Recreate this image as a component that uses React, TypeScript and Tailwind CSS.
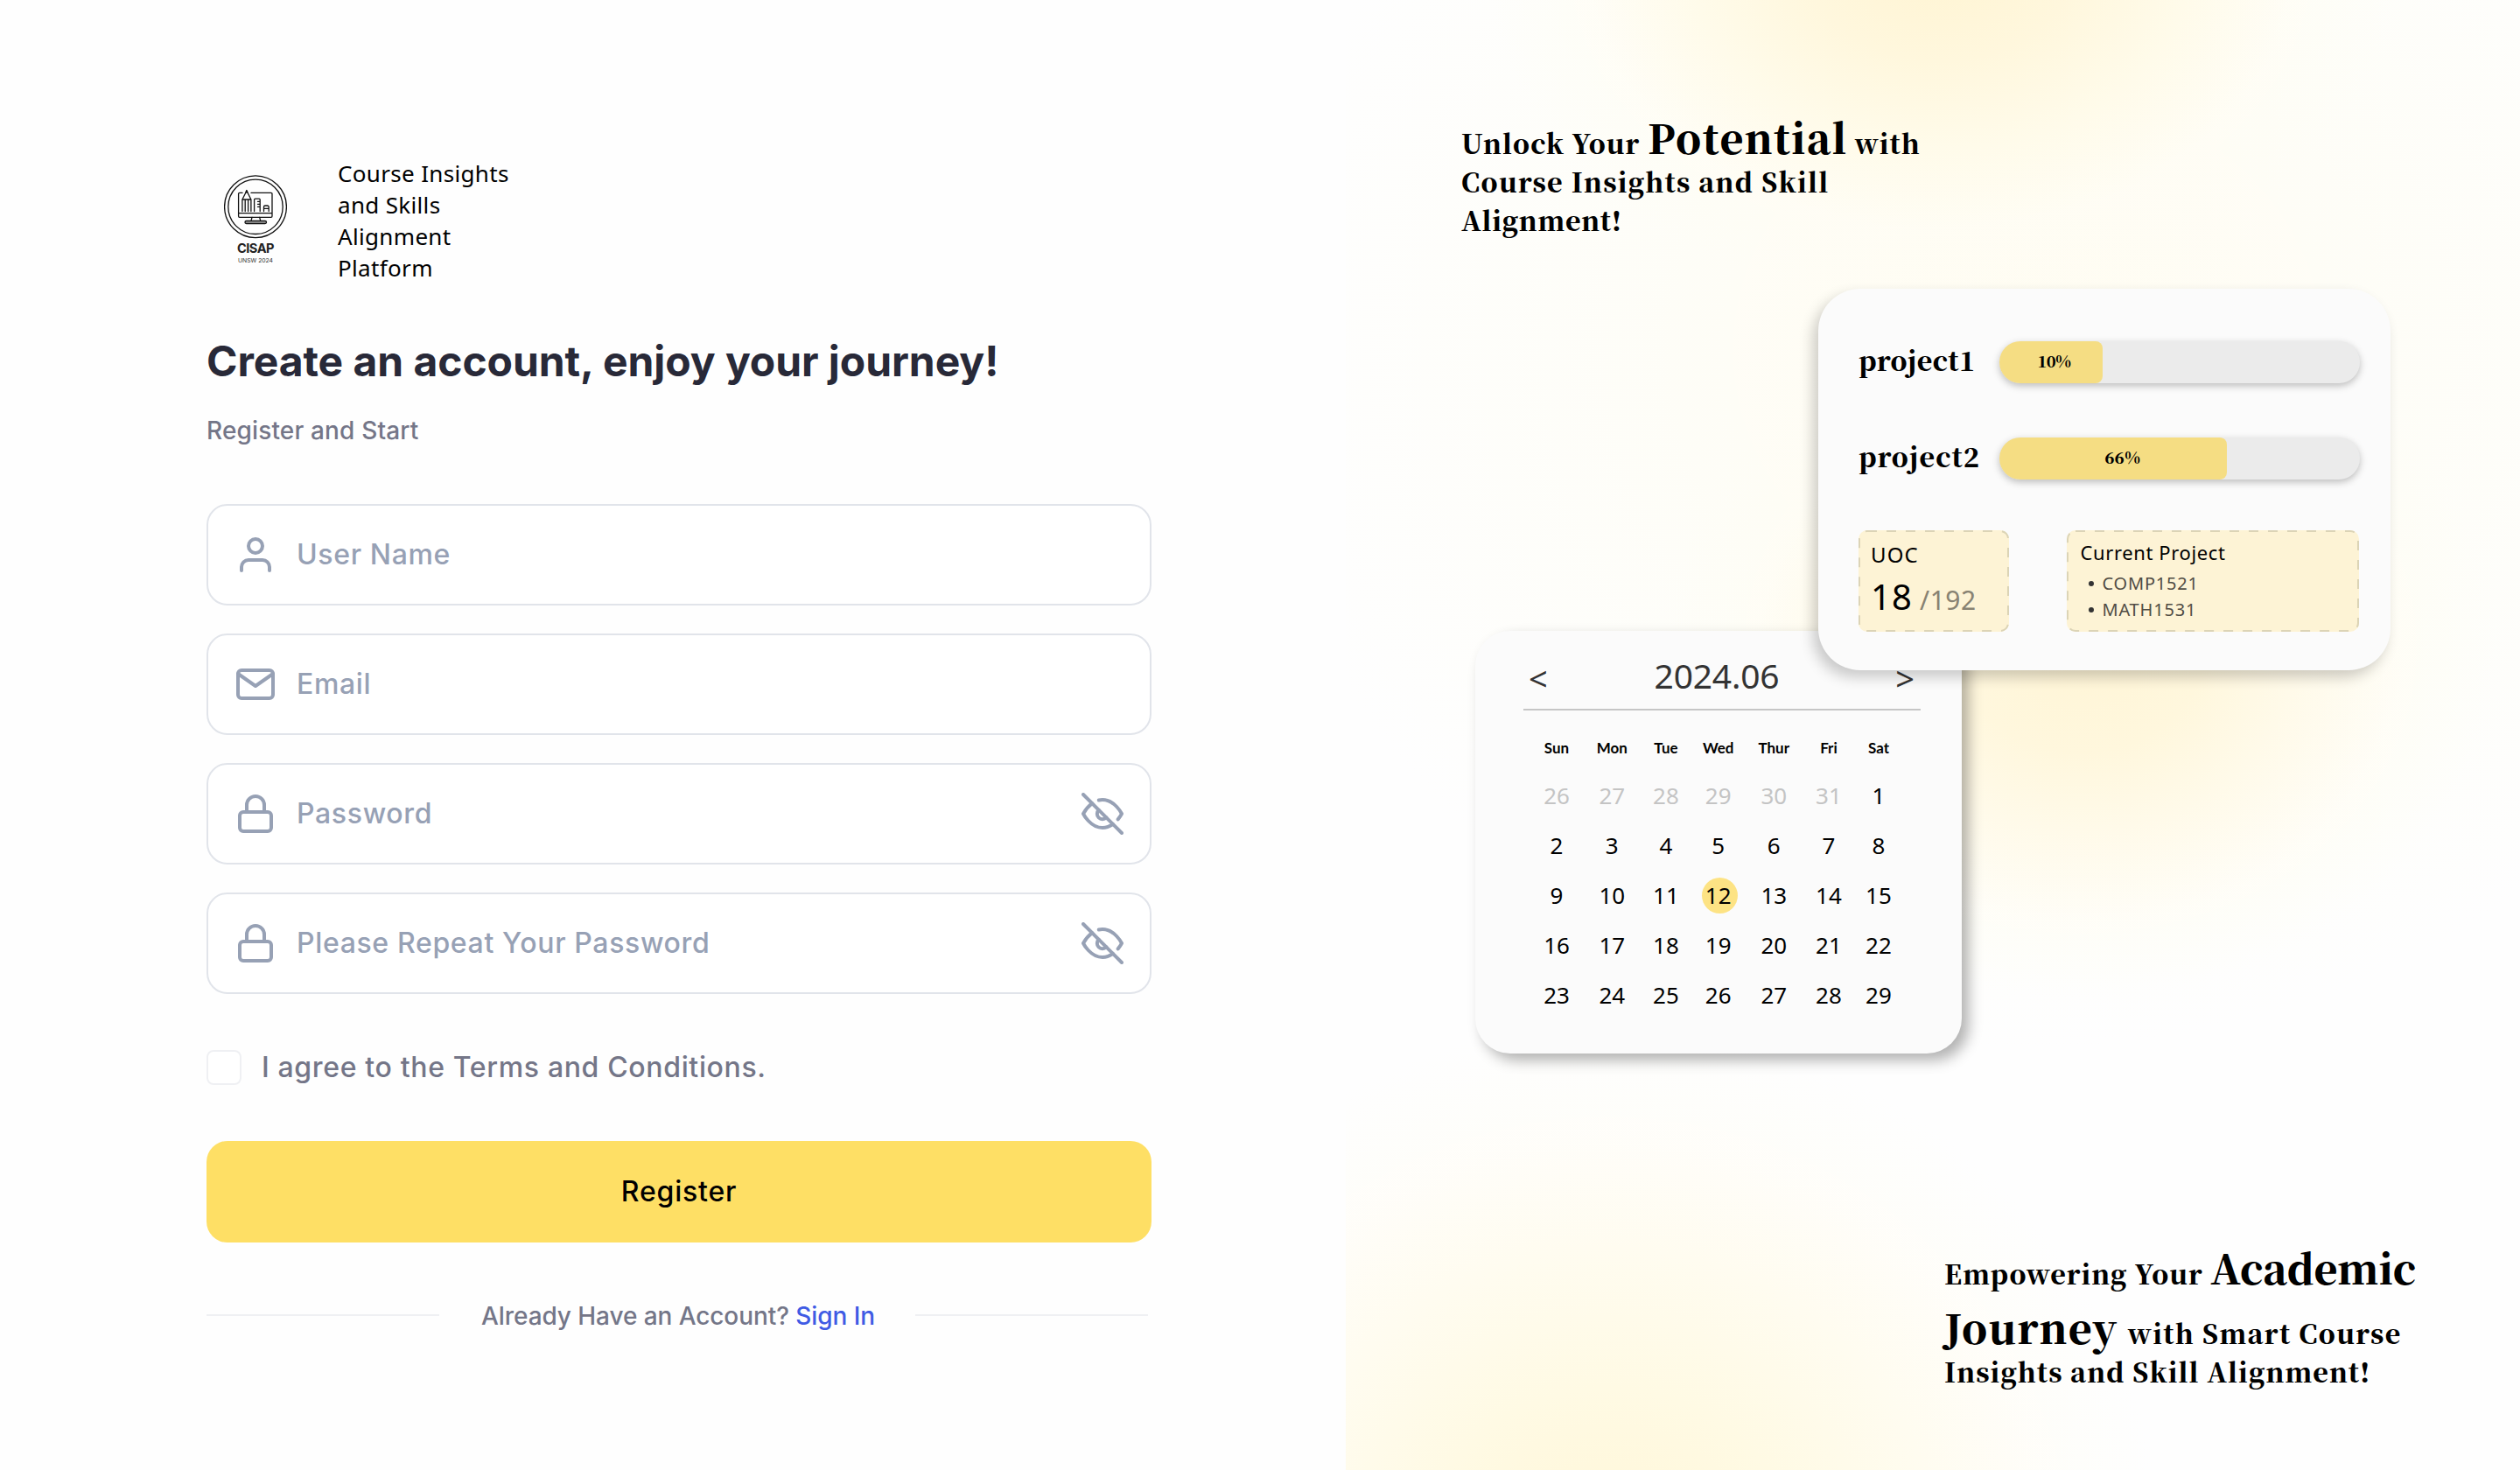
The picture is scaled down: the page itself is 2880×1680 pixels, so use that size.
import React from "react";
import { FiEyeOff, FiLock, FiMail, FiUser } from "react-icons/fi";
import type { IconType } from "react-icons";

const SERIF = "font-['Noto_Serif_CJK_SC','Liberation_Serif',serif] font-black";

function Logo() {
  return (
    <svg viewBox="0 0 72 120" className="h-[120px] w-[72px]" fill="none" stroke="#111" strokeWidth="1.3" strokeLinejoin="round" strokeLinecap="round">
      <circle cx="36" cy="46.3" r="35.4" />
      <circle cx="36" cy="46.3" r="31.2" />
      <path d="M21 30.4h-3.2a1.2 1.2 0 0 0-1.2 1.2v25.5a1.2 1.2 0 0 0 1.2 1.2h36a1.2 1.2 0 0 0 1.2-1.2V31.6a1.2 1.2 0 0 0-1.2-1.2H31M16.600 53.600H55" />
      <path d="M20.900 51.500V38l5-10 5 10v13.500M20.900 38h10M24.200 38v13.500M27.600 38v13.500" />
      <path d="M25 29.800l.9-2.300.9 2.300z" fill="#111" />
      <path d="M34.600 51.500V38.200a1 1 0 0 1 1-1h4.600a1 1 0 0 1 1 1v13.300M38.500 40.300h2.500M38.500 43.300h2.500M38.500 46.300h2.500" />
      <path d="M45.500 51.500v-5a1.500 1.500 0 0 1 1.500-1.500h2.700a1.500 1.500 0 0 1 1.500 1.500v5M45.500 48.400h5.700" />
      <path d="M32 58.400l-1 4M40.700 58.400l1 4" />
      <rect x="24" y="62.500" width="24.500" height="3" rx="1.500" fill="#aaa" />
      <text x="15" y="99.300" fontSize="14.600" fontWeight="700" fill="#222" stroke="none" textLength="42.500" className="font-['Inter',sans-serif]">CISAP</text>
      <text x="16" y="110" fontSize="6.800" fill="#333" stroke="none" textLength="40" className="font-['Inter',sans-serif]">UNSW 2024</text>
    </svg>
  );
}

function Field({ icon: Icon, label, secret }: { icon: IconType; label: string; secret?: boolean }) {
  return (
    <div className="flex h-[116px] items-center rounded-3xl border-2 border-[#e1e4ea] bg-white px-[30px]">
      <Icon className="size-12 shrink-0 text-[#97a1b5]" />
      <span className="ml-[23px] flex-1 text-[32px] font-medium tracking-[0.65px] text-[#97a1b5]">{label}</span>
      {secret && <FiEyeOff className="size-12 shrink-0 text-[#97a1b5]" />}
    </div>
  );
}

function RegisterForm() {
  return (
    <section className="flex w-[1538px] shrink-0 flex-col bg-[#fefefe] pl-[236px] font-['Inter',sans-serif]">
      <header className="flex h-[380px] pt-[180px]">
        <div className="ml-5 mt-[10px] w-[72px]"><Logo /></div>
        <p className="ml-[58px] w-[220px] font-['Noto_Sans',sans-serif] text-[26px] leading-9 tracking-[0.33px] text-black">
          Course Insights<br />and Skills<br />Alignment<br />Platform
        </p>
      </header>
      <h1 className="mt-[3px] text-[48px] leading-[60px] font-bold tracking-[-0.06px] text-[#282938]">Create an account, enjoy your journey!</h1>
      <p className="mt-[29px] text-[28px] leading-10 font-medium tracking-[0.15px] text-[#747688]">Register and Start</p>
      <form className="mt-16 flex w-[1080px] flex-col">
        <div className="flex flex-col gap-8">
          <Field icon={FiUser} label="User Name" />
          <Field icon={FiMail} label="Email" />
          <Field icon={FiLock} label="Password" secret />
          <Field icon={FiLock} label="Please Repeat Your Password" secret />
        </div>
        <label className="mt-16 flex h-10 items-center">
          <span className="size-10 rounded-lg border-2 border-[#eff0f3] bg-white" />
          <span className="ml-[23px] text-[32px] font-medium tracking-[0.65px] text-[#747688]">I agree to the Terms and Conditions.</span>
        </label>
        <button type="button" className="mt-16 flex h-[116px] items-center justify-center rounded-3xl bg-[#fedf65] text-[32px] font-medium tracking-[0.8px] text-black">
          Register
        </button>
        <div className="mt-[63px] flex h-10 items-center">
          <span className="h-0.5 w-[266px] bg-[#eff0f3]" />
          <p className="w-[544px] pt-px pl-0.5 text-center text-[28px] font-medium tracking-[-0.08px] text-[#747688]">
            Already Have an Account? <a className="text-[#3f5be4]">Sign In</a>
          </p>
          <span className="h-0.5 w-[266px] bg-[#eff0f3]" />
        </div>
      </form>
    </section>
  );
}

function ProjectBar({ name, label, fill, tracking }: { name: string; label: string; fill: string; tracking: string }) {
  return (
    <div className="flex h-12 items-center">
      <span className={`${SERIF} ${tracking} w-[161px] pb-[7px] text-[30px] leading-10`}>{name}</span>
      <div className="h-12 w-[412px] rounded-full bg-[#ebebeb] shadow-[0_3px_8px_rgba(0,0,0,0.25)]">
        <div className={`${SERIF} ${fill} flex h-12 items-center justify-center rounded-l-[24px] rounded-r-[8px] bg-[#f5dd83] pb-1 text-[18px]`}>{label}</div>
      </div>
    </div>
  );
}

function DashedOutline({ w, h }: { w: number; h: number }) {
  return (
    <svg className="absolute inset-0" width={w} height={h} fill="none">
      <rect x="1" y="1" width={w - 2} height={h - 2} rx="9" stroke="#dcd4b6" strokeWidth="2" strokeDasharray="11 11" />
    </svg>
  );
}

function ProjectCard() {
  return (
    <div className="relative z-10 ml-[540px] h-[436px] w-[654px] rounded-[48px] bg-[#fbfbfb] pt-[60px] pl-[46px] shadow-[-6px_8px_16px_rgba(0,0,0,0.2)]">
      <div className="flex flex-col gap-[62px]">
        <ProjectBar name="project1" label="10%" fill="w-[118px] pl-[7px] tracking-[-0.5px]" tracking="tracking-[0.4px]" />
        <ProjectBar name="project2" label="66%" fill="w-[260px] pl-[22px] tracking-[0.5px]" tracking="tracking-[1.1px]" />
      </div>
      <div className="mt-[58px] flex gap-[66px]">
        <div className="relative h-[116px] w-[172px] rounded-[10px] bg-[#fdf3d5] pt-3 pl-[14px]">
          <DashedOutline w={172} h={116} />
          <p className="text-[24px] leading-8 tracking-[1.1px]">UOC</p>
          <p className="mt-2 flex items-baseline leading-[48px]">
            <span className="w-[56px] text-[40px] tracking-[1.1px]">18</span>
            <span className="text-[30px] tracking-[0.5px] text-[#888272]">/192</span>
          </p>
        </div>
        <div className="relative h-[116px] w-[334px] rounded-[10px] bg-[#fdf3d5] pt-[10px] pl-[15.5px]">
          <DashedOutline w={334} h={116} />
          <p className="text-[22px] leading-[30px] tracking-[0.62px]">Current Project</p>
          <ul className="mt-[6px] text-[20px] leading-[30px] tracking-[0.8px] text-[#504c44]">
            {["COMP1521", "MATH1531"].map((c) => (
              <li key={c} className="flex items-center pl-[9px]">
                <span className="mr-[10px] size-1.5 rounded-full bg-[#333]" />{c}
              </li>
            ))}
          </ul>
        </div>
      </div>
    </div>
  );
}

const DAYS = ["Sun", "Mon", "Tue", "Wed", "Thur", "Fri", "Sat"];
const DATES = [26, 27, 28, 29, 30, 31, ...Array.from({ length: 29 }, (_, i) => i + 1)];

function Calendar() {
  return (
    <div className="-mt-[45px] ml-[148px] h-[483px] w-[556px] rounded-[40px] bg-[#fbfbfb] pt-[12px] shadow-[8px_8px_16px_rgba(0,0,0,0.3)]">
      <div className="ml-[55px] flex h-[79px] w-[454px] items-center justify-between border-b-2 border-[#c6c6c6] pr-[7px] pl-1.5 text-[#333]">
        <span className="pt-2 text-[38px]">&lt;</span>
        <span className="pt-px pr-[11px] text-[39px] tracking-[-0.2px]">2024.06</span>
        <span className="pt-2 text-[38px]">&gt;</span>
      </div>
      <div className="ml-[62px] grid grid-cols-[62px_64.6px_58.8px_60.6px_66.6px_58.8px_55.2px] grid-rows-[52px_repeat(5,56.9px)] place-items-center pt-[17px] text-[26px]">
        {DAYS.map((d) => (
          <span key={d} className="font-['Lato',sans-serif] text-[17px] font-bold">{d}</span>
        ))}
        {DATES.map((n, i) => (
          <span
            key={i}
            className={
              i < 6 ? "text-[#c4c4c4]" : n === 12 ? "flex size-[41px] translate-x-0.5 items-center justify-center rounded-full bg-[#fde384] pr-1" : ""
            }
          >
            {n}
          </span>
        ))}
      </div>
    </div>
  );
}

function Showcase() {
  return (
    <section className="flex-1 bg-[#fefefe] bg-[radial-gradient(ellipse_520px_400px_at_680px_-50px,#fff4d2_0%,#fff7dd_30%,#fffbea_55%,rgba(255,253,244,0.6)_78%,rgba(255,254,250,0)_100%),radial-gradient(ellipse_470px_400px_at_840px_740px,#fff5d6_0%,#fff7dd_30%,#fffae9_52%,rgba(255,253,244,0.6)_78%,rgba(255,254,250,0)_100%),radial-gradient(ellipse_640px_640px_at_300px_1810px,#fff5d4_0%,#fffae4_35%,#fffcf0_60%,rgba(255,253,246,0.6)_80%,rgba(255,254,250,0)_100%),radial-gradient(ellipse_900px_800px_at_780px_400px,rgba(255,252,238,0.8)_0%,rgba(255,254,250,0)_100%)] pt-[134px] font-['Noto_Sans',sans-serif] text-black">
      <h2 className={`${SERIF} ml-[132px] h-[196px] text-[30px] leading-[44px] tracking-[1px] whitespace-nowrap`}>
        <div className="flex items-baseline">
          <span className="w-[213px]">Unlock Your</span>
          <span className="w-[237px] text-[46px] tracking-[1.3px]">Potential</span>
          <span>with</span>
        </div>
        <div className="tracking-[1.27px]">Course Insights and Skill</div>
        <div className="tracking-[0.73px]">Alignment!</div>
      </h2>
      <ProjectCard />
      <Calendar />
      <h2 className={`${SERIF} mt-[222px] ml-[684px] text-[30px] leading-[44px] tracking-[1px] whitespace-nowrap`}>
        <div className="flex items-baseline">
          <span className="w-[304px]">Empowering Your</span>
          <span className="text-[46px] tracking-[-0.1px]">Academic</span>
        </div>
        <div className="mt-[17px] flex items-baseline">
          <span className="w-[210px] text-[46px] tracking-[1.15px]">Journey</span>
          <span className="tracking-[1.35px]">with Smart Course</span>
        </div>
        <div className="tracking-[1.09px]">Insights and Skill Alignment!</div>
      </h2>
    </section>
  );
}

export default function App() {
  return (
    <main className="flex h-[1680px] w-[2880px] overflow-hidden bg-white">
      <RegisterForm />
      <Showcase />
    </main>
  );
}
